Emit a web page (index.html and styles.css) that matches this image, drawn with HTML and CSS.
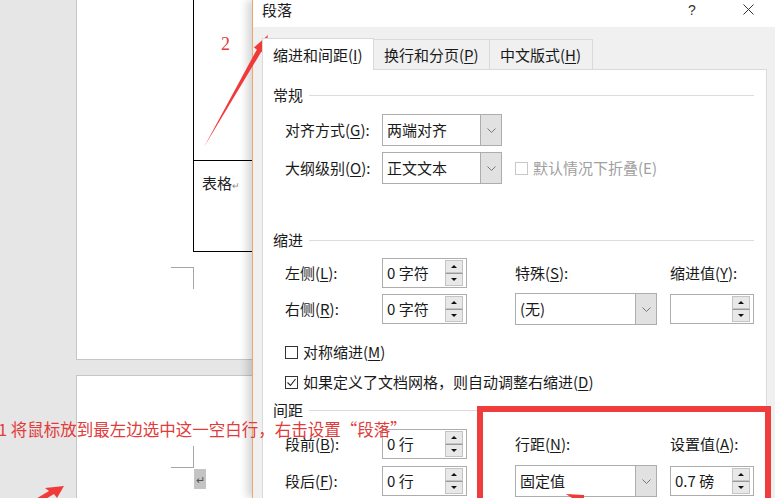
FILE: index.html
```html
<!doctype html>
<html lang="zh-CN">
<head>
  <meta charset="UTF-8"/>
  <title>段落</title>
  <link rel="stylesheet" href="styles.css">
</head>
<body>
  <div class="doc">
    <div class="page page-one">
      <div class="table">
        <div class="cell cell-top"></div>
        <div class="cell cell-text">表格<span class="ret">↵</span></div>
      </div>
      <div class="corner corner-top"></div>
    </div>
    <div class="page page-two">
      <div class="corner corner-bottom"></div>
      <div class="mark">↵</div>
    </div>
  </div>

  <div class="dialog">
    <div class="titlebar">
      <span class="title">段落</span>
      <span class="help">?</span>
      <span class="close">
        <svg width="11" height="11" viewBox="0 0 11 11"><path d="M0.5 0.5L10.5 10.5M10.5 0.5L0.5 10.5" stroke="#333" stroke-width="1"/></svg>
      </span>
    </div>
    <div class="dlg-body">
      <div class="tabs">
        <div class="tab active t1">缩进和间距(<u>I</u>)</div>
        <div class="tab t2">换行和分页(<u>P</u>)</div>
        <div class="tab t3">中文版式(<u>H</u>)</div>
      </div>
      <div class="panel">
        <div class="group"><span>常规</span></div>
        <div class="grid general">
          <div class="lbl">对齐方式(<u>G</u>):</div>
          <div class="combo w120"><span>两端对齐</span><i class="drop"><svg width="9" height="5"><path d="M0.5 0.5L4.5 4.5L8.5 0.5" fill="none" stroke="#777"/></svg></i></div>
          <div></div>
          <div></div>
          <div class="lbl">大纲级别(<u>O</u>):</div>
          <div class="combo w120"><span>正文文本</span><i class="drop"><svg width="9" height="5"><path d="M0.5 0.5L4.5 4.5L8.5 0.5" fill="none" stroke="#777"/></svg></i></div>
          <div class="check disabled span2"><i class="box"></i>默认情况下折叠(E)</div>
        </div>

        <div class="group g-indent"><span>缩进</span></div>
        <div class="grid indent">
          <div class="lbl">左侧(<u>L</u>):</div>
          <div class="spin w85"><span>0 字符</span><i class="arrows"><b class="up"></b><b class="down"></b></i></div>
          <div class="lbl">特殊(<u>S</u>):</div>
          <div class="lbl">缩进值(<u>Y</u>):</div>
          <div class="lbl">右侧(<u>R</u>):</div>
          <div class="spin w85"><span>0 字符</span><i class="arrows"><b class="up"></b><b class="down"></b></i></div>
          <div class="combo w142"><span>(无)</span><i class="drop"><svg width="9" height="5"><path d="M0.5 0.5L4.5 4.5L8.5 0.5" fill="none" stroke="#777"/></svg></i></div>
          <div class="spin w84"><span></span><i class="arrows"><b class="up"></b><b class="down"></b></i></div>
        </div>
        <div class="check c-mirror"><i class="box"></i>对称缩进(<u>M</u>)</div>
        <div class="check c-grid"><i class="box checked"><svg width="11" height="11" viewBox="0 0 11 11"><path d="M1.5 5.5L4.5 8.5L9.5 2" fill="none" stroke="#222" stroke-width="1.1"/></svg></i>如果定义了文档网格，则自动调整右缩进(<u>D</u>)</div>

        <div class="group g-space"><span>间距</span></div>
        <div class="grid spacing">
          <div class="lbl">段前(<u>B</u>):</div>
          <div class="spin w85"><span>0 行</span><i class="arrows"><b class="up"></b><b class="down"></b></i></div>
          <div class="lbl">行距(<u>N</u>):</div>
          <div class="lbl">设置值(<u>A</u>):</div>
          <div class="lbl">段后(<u>F</u>):</div>
          <div class="spin w85"><span>0 行</span><i class="arrows"><b class="up"></b><b class="down"></b></i></div>
          <div class="combo w142"><span>固定值</span><i class="drop"><svg width="9" height="5"><path d="M0.5 0.5L4.5 4.5L8.5 0.5" fill="none" stroke="#777"/></svg></i></div>
          <div class="spin w84"><span>0.7 磅</span><i class="arrows"><b class="up"></b><b class="down"></b></i></div>
        </div>
      </div>
    </div>
  </div>

  <!-- annotations drawn over the screenshot -->
  <div class="redbox"></div>
  <svg class="notes" width="775" height="498" viewBox="0 0 775 498">
    <polygon points="204,147 261.3,51.8 264.3,53.6 268,35 253.9,47.6 256.9,49.4" fill="#f03a3a"/>
    <polygon points="64,486 45,488 49,491 34,500 44,500 54,494 57,498" fill="#f03a3a"/>
    <polygon points="566,494 584,495 584,498 572,498" fill="#f03a3a"/>
  </svg>
  <div class="note-num">2</div>
  <div class="note-text">1 将鼠标放到最左边选中这一空白行，右击设置“段落”</div>
</body>
</html>
```

FILE: styles.css
```css
body {
  margin: 0;
  width: 775px;
  height: 498px;
  overflow: hidden;
  position: relative;
  background: #e6e6e6;
  font-family: "Noto Sans CJK SC", sans-serif;
  font-size: 15px;
  color: #1a1a1a;
}

u {
  text-decoration: underline;
  text-underline-offset: 2px;
}

/* document behind the dialog */
.doc {
  padding-left: 76px;
}

.page {
  background: #fff;
  border-left: 1px solid #c6c6c6;
  width: 400px;
}

.page-one {
  height: 359px;
  border-bottom: 1px solid #c6c6c6;
}

.page-two {
  margin-top: 15px;
  height: 130px;
  border-top: 1px solid #c6c6c6;
  overflow: hidden;
}

.table {
  margin-left: 116px;
  width: 120px;
  border-left: 1px solid #000;
}

.cell {
  border-bottom: 1px solid #000;
  box-sizing: border-box;
}

.cell-top {
  height: 161px;
}

.cell-text {
  height: 91px;
  padding: 12px 0 0 8px;
  line-height: 20px;
  font-size: 15px;
  color: #222;
}

.ret {
  font-size: 9px;
  color: #888;
}

.corner {
  width: 23px;
  height: 22px;
  margin-left: 94px;
  box-sizing: border-box;
  border-right: 1px solid #a6a6a6;
}

.corner-top {
  margin-top: 15px;
  border-top: 1px solid #a6a6a6;
}

.corner-bottom {
  margin-top: 70px;
  border-bottom: 1px solid #a6a6a6;
}

.mark {
  margin: 1px 0 0 117px;
  width: 12px;
  height: 20px;
  background: #c4c4c4;
  color: #555;
  font-size: 11px;
  line-height: 20px;
  text-align: center;
}

/* dialog window */
.dialog {
  position: absolute;
  left: 252px;
  top: 0;
  width: 523px;
  height: 498px;
  box-sizing: border-box;
  background: #f0f0f0;
  border-left: 1px solid #eda66e;
  box-shadow: -5px 0 8px rgba(0, 0, 0, 0.16);
}

.titlebar {
  height: 27px;
  background: #fff;
  display: flex;
  align-items: flex-start;
  padding-left: 9px;
  line-height: 20px;
}

.title {
  font-size: 15px;
}

.help {
  margin-left: auto;
  width: 26px;
  margin-right: 16px;
  text-align: center;
  font-family: "Liberation Sans", sans-serif;
  font-size: 14px;
  color: #333;
}

.close {
  width: 54px;
  height: 18px;
  display: flex;
  align-items: center;
  justify-content: center;
}

.dlg-body {
  padding: 11px 0 0 9px;
}

.tabs {
  display: flex;
  align-items: flex-end;
  height: 31px;
}

.tab {
  height: 30px;
  box-sizing: border-box;
  border: 1px solid #d9d9d9;
  border-bottom: 0;
  padding-left: 10px;
  display: flex;
  align-items: center;
  font-size: 15px;
  background: #f0f0f0;
}

.tab.active {
  height: 32px;
  margin-bottom: -1px;
  background: #fff;
  position: relative;
  z-index: 1;
}

.tab.t1 { width: 112px; }
.tab.t2 { width: 116px; border-left: 0; }
.tab.t3 { width: 103px; border-left: 0; }

.panel {
  width: 505px;
  height: 440px;
  box-sizing: border-box;
  background: #fff;
  border: 1px solid #d9d9d9;
  padding-left: 10px;
}

.group {
  display: flex;
  align-items: center;
  height: 20px;
  line-height: 20px;
  margin-top: 15px;
  margin-right: 12px;
}

.group::after {
  content: "";
  flex: 1;
  height: 1px;
  background: #dcdcdc;
  margin-left: 6px;
}

.g-indent { margin-top: 46px; }
.g-space { margin-top: 8px; }

.grid {
  display: grid;
  grid-template-columns: 97px 133px 155px 90px;
  padding-left: 12px;
  align-items: center;
  line-height: 20px;
}

.general {
  margin-top: 9px;
  grid-template-rows: 32px 32px;
  row-gap: 6px;
}

.indent {
  margin-top: 8px;
  grid-template-rows: 30px 32px;
  row-gap: 5px;
}

.spacing {
  margin-top: 9px;
  grid-template-rows: 30px 32px;
  row-gap: 6px;
}

.span2 {
  grid-column: span 2;
}

.combo, .spin {
  display: flex;
  align-items: stretch;
  box-sizing: border-box;
  border: 1px solid #adadad;
  background: #fff;
  height: 32px;
}

.spin {
  height: 30px;
}

.combo span, .spin span {
  flex: 1;
  display: flex;
  align-items: center;
  padding-left: 4px;
}

.w120 { width: 120px; }
.w142 { width: 142px; }
.w85 { width: 85px; }
.w84 { width: 84px; }

.drop {
  width: 20px;
  background: #e1e1e1;
  border-left: 1px solid #adadad;
  display: flex;
  align-items: center;
  justify-content: center;
}

.arrows {
  width: 18px;
  margin: 1px 3px 1px 0;
  display: flex;
  flex-direction: column;
}

.arrows b {
  flex: 1;
  background: #e8e8e8;
  border: 1px solid #c4c4c4;
  display: flex;
  align-items: center;
  justify-content: center;
}

.arrows b + b {
  border-top: 1px solid #9a9a9a;
}

.arrows .up::before {
  content: "";
  border-left: 3px solid transparent;
  border-right: 3px solid transparent;
  border-bottom: 3px solid #111;
}

.arrows .down::before {
  content: "";
  border-left: 3px solid transparent;
  border-right: 3px solid transparent;
  border-top: 3px solid #111;
}

.check {
  display: flex;
  align-items: center;
  height: 20px;
  line-height: 20px;
}

.check .box {
  width: 11px;
  height: 11px;
  border: 1px solid #333;
  margin-right: 5px;
  display: flex;
}

.check.disabled {
  color: #a0a0a0;
}

.check.disabled .box {
  border-color: #c8c8c8;
}

.c-mirror {
  margin: 17px 0 0 12px;
}

.c-grid {
  margin: 10px 0 0 12px;
}

/* annotations */
.redbox {
  position: absolute;
  left: 477px;
  top: 406px;
  width: 294px;
  height: 100px;
  box-sizing: border-box;
  border: 6px solid #ef3c3c;
}

.notes {
  position: absolute;
  left: 0;
  top: 0;
}

.note-num {
  position: absolute;
  left: 221px;
  top: 34px;
  font-family: "Liberation Serif", serif;
  font-size: 18px;
  color: #e23b3b;
}

.note-text {
  position: absolute;
  left: -2px;
  top: 418px;
  font-size: 16.5px;
  line-height: 22px;
  color: #e23b3b;
  white-space: nowrap;
}
```
